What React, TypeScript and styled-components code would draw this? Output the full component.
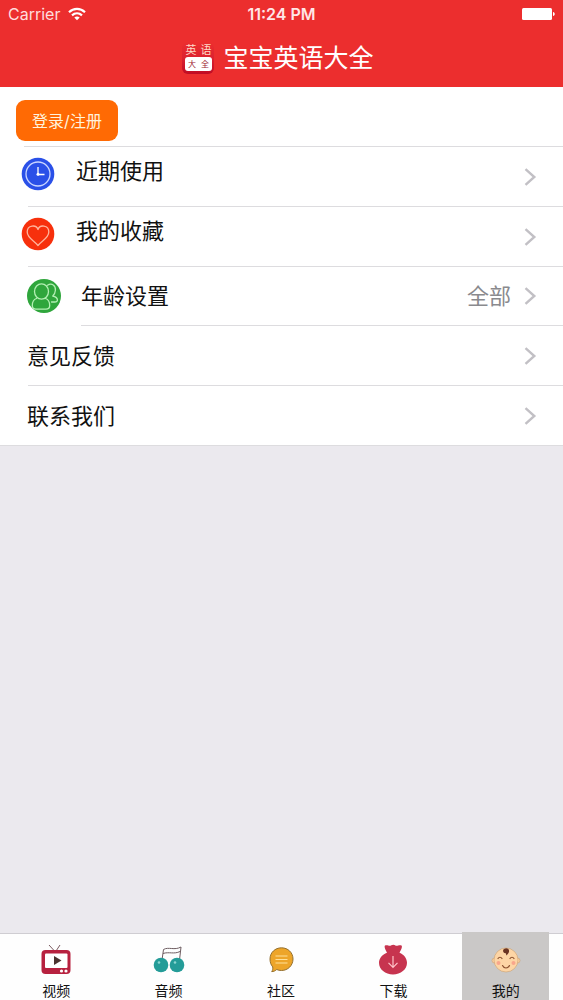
import React from 'react';
import styled, { createGlobalStyle } from 'styled-components';

const GlobalStyle = createGlobalStyle`
  *, *::before, *::after { box-sizing: border-box; }
  body {
    margin: 0;
    background: #ebe9ee;
    color: #111;
    font-family: Inter, "Noto Sans CJK SC", sans-serif;
  }
  button { font-family: inherit; }
  svg { display: block; flex: none; }
`;

const Page = styled.div`
  min-height: 100vh;
  display: flex;
  flex-direction: column;
`;

const Header = styled.header`
  background: #ec2e2e;
  color: #fff;
`;

const StatusBar = styled.div`
  display: grid;
  grid-template-columns: 1fr auto 1fr;
  align-items: center;
  height: 28px;
  padding: 0 8px;
  font-size: 16px;
  line-height: 28px;
`;

const Carrier = styled.span`
  display: flex;
  align-items: center;
  gap: 8px;
  color: #ffdcdc;
`;

const Clock = styled.time`
  font-weight: 600;
  color: #ffe6e6;
`;

const BatterySlot = styled.span`
  justify-self: end;
`;

const TitleBar = styled.div`
  display: flex;
  align-items: center;
  justify-content: center;
  gap: 8px;
  height: 59px;
  padding-right: 8px;
`;

const Title = styled.h1`
  margin: 0;
  font-size: 25px;
  font-weight: 400;
  line-height: 36px;
`;

const Main = styled.main`
  flex: 1;
`;

const Menu = styled.ul`
  margin: 0;
  padding: 0;
  list-style: none;
  background: #fff;
`;

const MenuItem = styled.li<{ $height: number }>`
  display: flex;
  flex-direction: column;
  height: ${p => p.$height}px;
`;

const Divider = styled.div<{ $inset: number }>`
  height: 1px;
  margin-left: ${p => p.$inset}px;
  background: #dddcdf;
`;

const LoginArea = styled.div`
  flex: 1;
  padding: 13px 16px 0;
`;

const LoginButton = styled.button`
  width: 102px;
  height: 41px;
  padding: 0;
  border: 0;
  border-radius: 9px;
  background: #ff6a04;
  color: #fff3dc;
  font-size: 16px;
  line-height: 24px;
`;

const RowLink = styled.a<{ $indent: number }>`
  flex: 1;
  display: flex;
  align-items: center;
  padding: 0 25px 0 ${p => p.$indent}px;
  color: inherit;
  text-decoration: none;
`;

const RowContent = styled.span<{ $raised: boolean }>`
  flex: 1;
  display: flex;
  align-items: center;
  padding-bottom: ${p => (p.$raised ? 6 : 0)}px;
`;

const RowLabel = styled.span<{ $gap: number; $raised: boolean }>`
  margin-left: ${p => p.$gap}px;
  padding-bottom: ${p => (p.$raised ? 6 : 0)}px;
  font-size: 22px;
  line-height: 32px;
`;

const RowValue = styled.span`
  margin-right: 12px;
  color: #8a8a8e;
  font-size: 22px;
  line-height: 32px;
`;

const TabBar = styled.nav`
  display: grid;
  grid-template-columns: repeat(5, 1fr);
  justify-items: center;
  height: 67px;
  padding-right: 1px;
  border-top: 1px solid #cfcdd2;
  background: #fefefe;
`;

const Tab = styled.button<{ $active: boolean }>`
  display: flex;
  flex-direction: column;
  align-items: center;
  gap: 5px;
  width: 87px;
  height: 68px;
  margin-top: -2px;
  padding: 12px 0 0;
  border: 0;
  background: ${p => (p.$active ? '#cac8c7' : 'transparent')};
  color: #111;
  font-size: 14px;
  line-height: 20px;
`;

const WifiIcon = () => (
  <svg width="18" height="14" viewBox="0 0 18 14" aria-hidden="true" fill="none" stroke="#fff" strokeWidth="2.2">
    <path d="M1 5.2C5.6.7 12.4.7 17 5.2" />
    <path d="M4 8.4c2.900-2.700 7.100-2.700 10 0" />
    <path d="M6.300 10.500c1.600-1.500 3.800-1.500 5.400 0L9 13.200z" fill="#fff" stroke="none" />
  </svg>
);

const BatteryIcon = () => (
  <svg width="33" height="14" viewBox="0 0 33 14" aria-hidden="true" fill="#fff">
    <rect x="0" y="1" width="30" height="12" rx="1.500" />
    <path d="M31 5c2.300.4 2.300 3.600 0 4z" />
  </svg>
);

const AppLogo = () => (
  <svg width="34" height="34" viewBox="0 0 34 34" aria-hidden="true">
    <defs>
      <linearGradient id="logoShade" x1="0" y1="0" x2="0" y2="1">
        <stop offset="0" stopColor="#ec2e2e" />
        <stop offset="0.5" stopColor="#dc2230" />
        <stop offset="1" stopColor="#c00c24" />
      </linearGradient>
    </defs>
    <rect x="1" y="1" width="32" height="32" rx="6" fill="url(#logoShade)" />
    <rect x="4" y="16" width="27" height="14" rx="3" fill="#fff" />
    <g fontFamily='"Noto Sans CJK SC", sans-serif' textAnchor="middle">
      <text x="10" y="13" fontSize="11" fill="#ffd9c8">英</text>
      <text x="25" y="13" fontSize="11" fill="#ffd9c8">语</text>
      <text x="11" y="26" fontSize="8" fill="#a01c30">大</text>
      <text x="24" y="26" fontSize="8" fill="#a01c30">全</text>
    </g>
  </svg>
);

const ClockIcon = () => (
  <svg width="34" height="34" viewBox="0 0 34 34" aria-hidden="true" fill="none">
    <circle cx="17" cy="17" r="16.300" fill="#2a50e8" />
    <circle cx="17" cy="17" r="12" stroke="#c9d5ff" strokeWidth="1.300" />
    <path d="M17 10v7.500h6.500" stroke="#fff" strokeWidth="1.300" />
    <circle cx="17" cy="17.300" r="1.500" fill="#fff" />
  </svg>
);

const HeartIcon = () => (
  <svg width="34" height="34" viewBox="0 0 34 34" aria-hidden="true" fill="none">
    <circle cx="17" cy="17" r="16.300" fill="#f7300c" />
    <path
      d="M17 12.500C15.500 7.500 6.200 7.600 6.200 15c0 6 7.300 9 10.800 13.500C20.500 24 27.800 21 27.800 15c0-7.400-9.300-7.500-10.800-2.500z"
      stroke="#ffb49c"
      strokeWidth="1.300"
      strokeLinejoin="round"
    />
  </svg>
);

const PeopleIcon = () => (
  <svg width="34" height="34" viewBox="0 0 34 34" aria-hidden="true" fill="none">
    <circle cx="17" cy="17" r="17" fill="#2fa63c" />
    <g stroke="#b4efb4" strokeWidth="1.300" strokeLinejoin="round" strokeLinecap="round">
      <path d="M20.500 6.200c4.500-2.800 8.300.500 7.900 5.100-.2 2.700-1.100 4.600-2.700 5.700 2.300.600 4.600 1.500 4.700 3.800.1 1.600-1 2.200-2.600 2.200h-3.300" />
      <ellipse cx="14.500" cy="12.500" rx="7" ry="7.700" />
      <path d="M9.500 19.500C6.500 20.500 5.300 23 5.300 26.500c0 2.500 1.200 3.700 3.700 3.700h10c2.500 0 3.700-1.200 3.700-3.700 0-3.500-1.200-6-4.200-7" />
    </g>
  </svg>
);

const Chevron = () => (
  <svg width="15" height="20" viewBox="0 0 15 20" aria-hidden="true" fill="none">
    <path d="M2.500 2.200 11.300 10l-8.800 7.800" stroke="#c2c0c5" strokeWidth="2.400" />
  </svg>
);

const VideoIcon = () => (
  <svg width="32" height="32" viewBox="0 0 32 32" aria-hidden="true">
    <path d="M9 1l5.500 6M20 1l-4 6" stroke="#7a5a60" strokeWidth="1" fill="none" />
    <rect x="1.500" y="6" width="29" height="24" rx="4" fill="#b7213f" />
    <rect x="5" y="9.500" width="22.500" height="14.500" rx="1" fill="#fff" />
    <path d="M14 12l7.500 4.500L14 21z" fill="#4b3330" />
    <circle cx="21.500" cy="27" r="1.600" fill="#fff" />
    <circle cx="26" cy="27" r="1.600" fill="#fff" />
  </svg>
);

const AudioIcon = () => (
  <svg width="32" height="32" viewBox="0 0 32 32" aria-hidden="true">
    <path
      d="M9 16l1.500-10.500c5-3 11 1.200 17.500-2.500L26.500 16M10 9.500c6-2 11 1 17-2"
      stroke="#6d5c60"
      strokeWidth="1"
      fill="none"
    />
    <circle cx="8" cy="21" r="7.300" fill="#249c98" />
    <circle cx="24" cy="21" r="7.300" fill="#249c98" />
    <circle cx="6" cy="18.500" r="1.300" fill="#8bd6d0" />
    <circle cx="22" cy="18.500" r="1.300" fill="#8bd6d0" />
  </svg>
);

const CommunityIcon = () => (
  <svg width="32" height="32" viewBox="0 0 32 32" aria-hidden="true">
    <path
      d="M16.500 3.800c6.400 0 11.500 4.800 11.500 11.200S22.900 26.500 16.500 26.500c-1.800 0-3.400-.300-4.800-1-1.300 1.400-3.200 2.100-5 2.100.9-1.200 1.300-2.900 1-4.700C5.900 20.900 5 18.200 5 15 5 8.600 10.100 3.800 16.500 3.800z"
      fill="#eda529"
      stroke="#94702f"
      strokeWidth="1"
    />
    <path d="M10.500 12h12M10.500 15.500h12M10.500 19h12" stroke="#ffe19a" strokeWidth="1.200" />
  </svg>
);

const DownloadIcon = () => (
  <svg width="32" height="32" viewBox="0 0 32 32" aria-hidden="true">
    <path
      d="M8 1.500c2-.900 3.500.300 4.700.300S14.700.700 16.300.700s2 1.100 3.300 1.100 3-1.200 4.900-.3c1.300 1-.7 5-2 7.200 4.500 1.800 7.500 5.800 7.500 10.100 0 6.700-6.300 11.700-14 11.700S2 25.500 2 18.800C2 14.500 5.200 10.500 10 8.700 8.800 6.500 6.800 2.500 8 1.500z"
      fill="#c7344f"
    />
    <path d="M16 12v11.300M11.500 18.800l4.500 4.500 4.500-4.500" stroke="#ffc3c9" strokeWidth="1.200" fill="none" />
  </svg>
);

const BabyIcon = () => (
  <svg width="32" height="32" viewBox="0 0 32 32" aria-hidden="true" fill="none">
    <circle cx="4.500" cy="16.500" r="2.500" fill="#fbd0a0" stroke="#c99f72" strokeWidth="0.600" />
    <circle cx="27.500" cy="16.500" r="2.500" fill="#fbd0a0" stroke="#c99f72" strokeWidth="0.600" />
    <ellipse cx="16" cy="16" rx="12" ry="12" fill="#fdd5a5" stroke="#c99f72" strokeWidth="0.600" />
    <path d="M14 5c3-2 6.500.3 4.500 4-.6 1.300-1.500 2-2.500 2.500.3-1 .2-1.600-.3-2.200C13.500 9.500 12 6.500 14 5z" fill="#6a3423" />
    <path d="M8 14.500c1-1.700 3-1.700 4 0M20 14.500c1-1.700 3-1.700 4 0M12.500 21.500c1.500 3.300 5.500 3.300 7 0" stroke="#8c5230" strokeWidth="1.200" strokeLinecap="round" />
    <circle cx="8.500" cy="19" r="2" fill="#f9a68c" />
    <circle cx="23.500" cy="19" r="2" fill="#f9a68c" />
  </svg>
);

type Item = {
  id: string;
  label: string;
  icon?: React.ReactNode;
  value?: string;
  raised?: boolean;
  height: number;
  indent: number;
  gap: number;
  inset: number;
};

const items: Item[] = [
  { id: 'recent', label: '近期使用', icon: <ClockIcon />, raised: true, height: 60, indent: 21, gap: 21, inset: 28 },
  { id: 'favorites', label: '我的收藏', icon: <HeartIcon />, raised: true, height: 60, indent: 21, gap: 21, inset: 28 },
  { id: 'age', label: '年龄设置', icon: <PeopleIcon />, value: '全部', height: 59, indent: 27, gap: 20, inset: 81 },
  { id: 'feedback', label: '意见反馈', height: 60, indent: 27, gap: 0, inset: 28 },
  { id: 'contact', label: '联系我们', height: 60, indent: 27, gap: 0, inset: 0 },
];

const tabs = [
  { label: '视频', icon: <VideoIcon /> },
  { label: '音频', icon: <AudioIcon /> },
  { label: '社区', icon: <CommunityIcon /> },
  { label: '下载', icon: <DownloadIcon /> },
  { label: '我的', icon: <BabyIcon />, active: true },
];

export default function App() {
  return (
    <Page>
      <GlobalStyle />
      <Header>
        <StatusBar>
          <Carrier>
            Carrier
            <WifiIcon />
          </Carrier>
          <Clock>11:24 PM</Clock>
          <BatterySlot>
            <BatteryIcon />
          </BatterySlot>
        </StatusBar>
        <TitleBar>
          <AppLogo />
          <Title>宝宝英语大全</Title>
        </TitleBar>
      </Header>
      <Main>
        <Menu>
          <MenuItem $height={60}>
            <LoginArea>
              <LoginButton type="button">登录/注册</LoginButton>
            </LoginArea>
            <Divider $inset={24} />
          </MenuItem>
          {items.map(item => (
            <MenuItem key={item.id} $height={item.height}>
              <RowLink href={`#${item.id}`} $indent={item.indent}>
                <RowContent $raised={!!item.raised}>
                  {item.icon}
                  <RowLabel $gap={item.gap} $raised={!!item.raised}>
                    {item.label}
                  </RowLabel>
                </RowContent>
                {item.value && <RowValue>{item.value}</RowValue>}
                <Chevron />
              </RowLink>
              <Divider $inset={item.inset} />
            </MenuItem>
          ))}
        </Menu>
      </Main>
      <TabBar>
        {tabs.map(tab => (
          <Tab key={tab.label} type="button" $active={!!tab.active} aria-current={tab.active ? 'page' : undefined}>
            {tab.icon}
            {tab.label}
          </Tab>
        ))}
      </TabBar>
    </Page>
  );
}
